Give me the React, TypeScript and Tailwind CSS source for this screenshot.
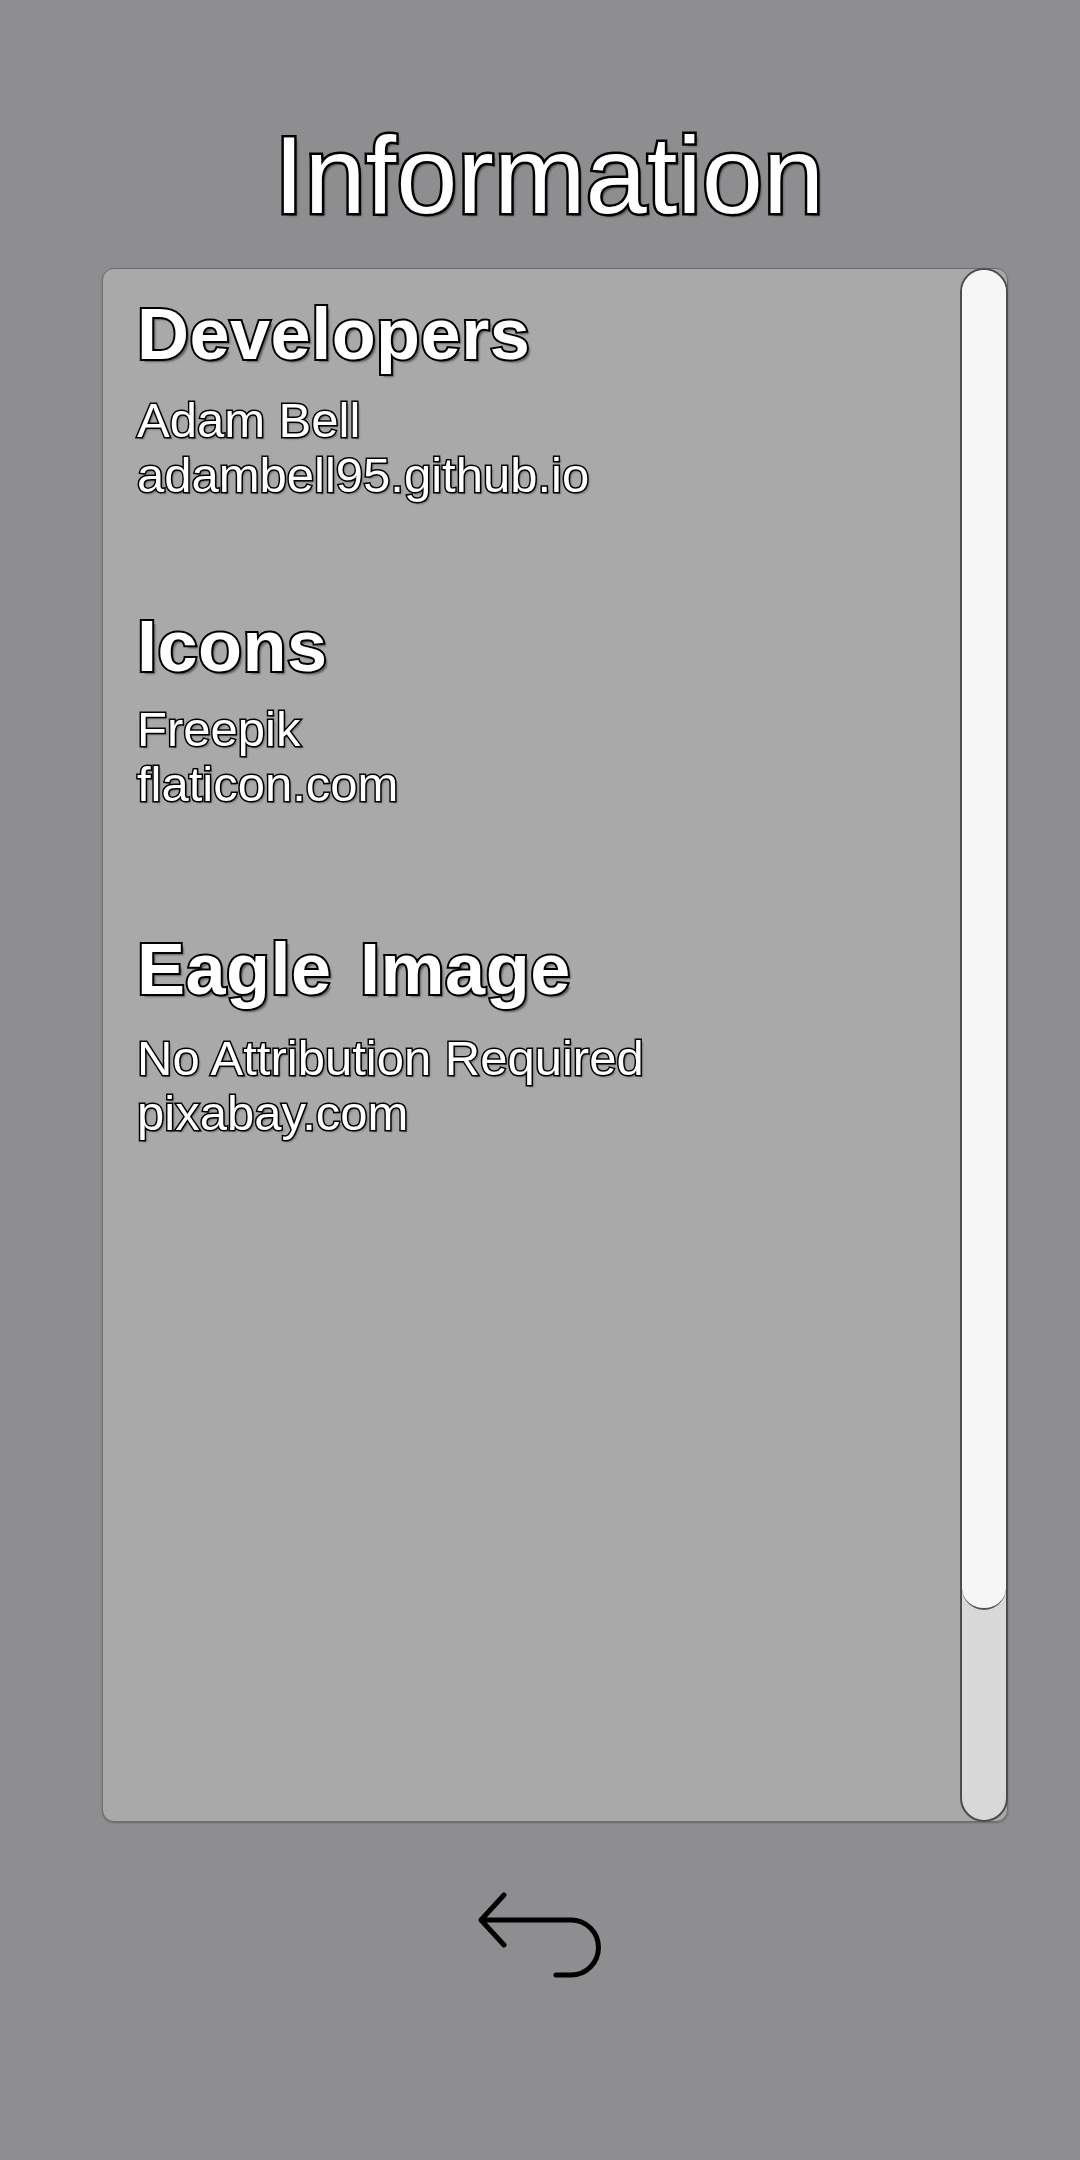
const heading =
  "text-[72px] font-bold leading-none tracking-[0.5px] [word-spacing:8px] text-white [paint-order:stroke_fill] [-webkit-text-stroke:4px_#000] [text-shadow:3px_3px_2px_rgba(0,0,0,0.45)]";
const body =
  "text-[49px] leading-[55px] text-white [paint-order:stroke_fill] [-webkit-text-stroke:3px_#000] [text-shadow:2px_2px_2px_rgba(0,0,0,0.4)]";

const sections = [
  { title: "Developers", lines: ["Adam Bell", "adambell95.github.io"], mt: "mt-0", gap: "mt-[23px]" },
  { title: "Icons", lines: ["Freepik", "flaticon.com"], mt: "mt-[107px]", gap: "mt-[20px]" },
  { title: "Eagle Image", lines: ["No Attribution Required", "pixabay.com"], mt: "mt-[121px]", gap: "mt-[26px]" },
];

function BackIcon() {
  return (
    <svg width="130" height="94" viewBox="0 0 130 94" fill="none">
      <path
        d="M29 7 L6 32 L29 57 M6 32 H96 A27.5 27.5 0 0 1 96 87 H81"
        stroke="#000"
        strokeWidth="5"
        strokeLinecap="round"
        strokeLinejoin="round"
      />
    </svg>
  );
}

export default function App() {
  return (
    <div className="w-[1080px] h-[2160px] bg-[#8e8e90] font-['Liberation_Sans',Arial,sans-serif] overflow-hidden">
      {/* Title */}
      <div className="pt-[120px] pl-[18px] text-center">
        <h1 className="text-[110px] leading-none text-white [paint-order:stroke_fill] [-webkit-text-stroke:5px_#000] [text-shadow:3px_3px_2px_rgba(0,0,0,0.45)]">
          Information
        </h1>
      </div>

      {/* Panel */}
      <div className="mt-[38px] ml-[102px] w-[906px] h-[1554px] flex rounded-[12px] border border-[#6e6e6e] bg-[#a9a9a9] shadow-[0_1px_2px_rgba(0,0,0,0.25)]">
        <div className="flex-1 pl-[34px] pt-[29px]">
          {sections.map((s) => (
            <div key={s.title} className={s.mt}>
              <h2 className={heading}>{s.title}</h2>
              <div className={s.gap}>
                {s.lines.map((l) => (
                  <p key={l} className={body}>
                    {l}
                  </p>
                ))}
              </div>
            </div>
          ))}
        </div>

        {/* Scrollbar */}
        <div className="-my-px -mr-px w-[48px] rounded-full border-2 border-[#4d4d4d] bg-[#d8d8d8] overflow-hidden">
          <div className="h-[1340px] rounded-b-full bg-[#f6f6f6] border-b-2 border-[#555]" />
        </div>
      </div>

      {/* Back */}
      <div className="mt-[66px] flex justify-center">
        <BackIcon />
      </div>
    </div>
  );
}
